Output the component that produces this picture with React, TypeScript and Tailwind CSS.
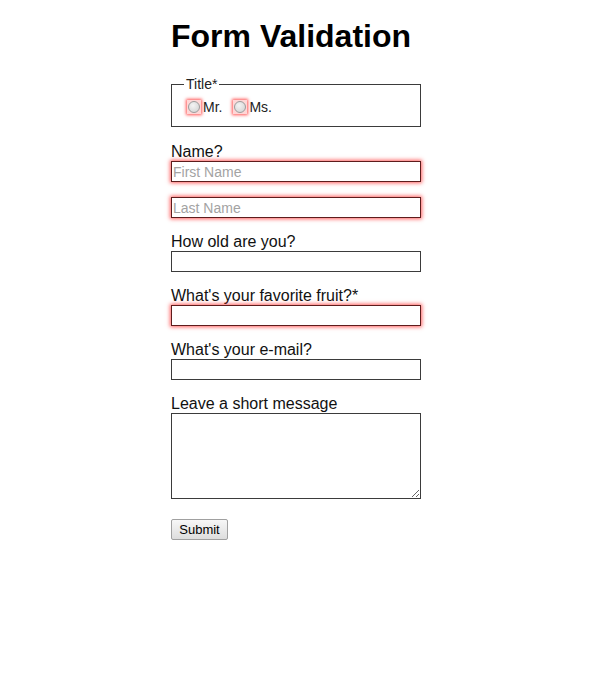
import type { FormEvent } from "react";

const errorGlow =
  "border-[#5e1c1c] shadow-[0_0_4px_1px_rgba(255,40,40,0.75)]";
const normalBorder = "border-[#3b3b3b]";

function Radio({ label, name }: { label: string; name: string }) {
  return (
    <label className="flex items-center text-[14px] leading-[16px] text-[#222]">
      <span className="ml-[3px] flex h-[14px] w-[14px] items-center justify-center bg-[#ffd6d6] shadow-[0_0_3px_1px_rgba(255,40,40,0.8)]">
        <input
          type="radio"
          name={name}
          value={label}
          className="m-0 h-[12px] w-[12px] appearance-none rounded-full border border-[#9c9c9c] bg-[radial-gradient(circle_at_40%_35%,#f4f4f4,#cfcfcf)]"
        />
      </span>
      <span className="ml-[2px] mr-[8px]">{label}</span>
    </label>
  );
}

function TextField({
  label,
  placeholder,
  invalid,
  type = "text",
}: {
  label?: string;
  placeholder?: string;
  invalid?: boolean;
  type?: string;
}) {
  return (
    <div className="mb-[15px] flex flex-col">
      {label && <span className="text-[16px] leading-[18px] text-[#111]">{label}</span>}
      <input
        type={type}
        placeholder={placeholder}
        className={`h-[21px] w-[250px] border bg-white px-[1px] text-[14px] leading-[17px] outline-none placeholder:text-[#a3a3a3] ${invalid ? errorGlow : normalBorder}`}
      />
    </div>
  );
}

export default function App() {
  const handleSubmit = (event: FormEvent<HTMLFormElement>) => {
    event.preventDefault();
  };

  return (
    <div className="min-h-[676px] w-full bg-white font-['Liberation_Sans',Arial,sans-serif] text-black">
      <div className="ml-[171px] w-[250px] pt-[18px]">
        <h1 className="whitespace-nowrap text-[32px] font-bold leading-[37px]">
          Form Validation
        </h1>

        <form className="mt-[21px]" onSubmit={handleSubmit}>
          <fieldset className="border border-[#3b3b3b] px-[12px] pb-[9px]">
            <legend className="px-[2px] text-[14px] leading-[16px] text-[#222]">
              Title*
            </legend>
            <div className="mt-[5px] flex h-[20px] items-center">
              <Radio label="Mr." name="title" />
              <Radio label="Ms." name="title" />
            </div>
          </fieldset>

          <div className="mt-[16px]">
            <TextField label="Name?" placeholder="First Name" invalid />
            <TextField placeholder="Last Name" invalid />
            <TextField label="How old are you?" type="number" />
            <TextField label="What's your favorite fruit?*" invalid />
            <TextField label="What's your e-mail?" type="email" />

            <div className="flex flex-col">
              <span className="text-[16px] leading-[18px] text-[#111]">
                Leave a short message
              </span>
              <textarea className="block h-[86px] w-[250px] border border-[#3b3b3b] bg-white p-[1px] text-[14px] outline-none" />
            </div>

            <button
              type="submit"
              className="mt-[20px] h-[21px] w-[57px] rounded-[2px] border border-[#a0a0a0] bg-[linear-gradient(#f7f7f7,#dddddd)] text-[13px] leading-[19px] text-black"
            >
              Submit
            </button>
          </div>
        </form>
      </div>
    </div>
  );
}
